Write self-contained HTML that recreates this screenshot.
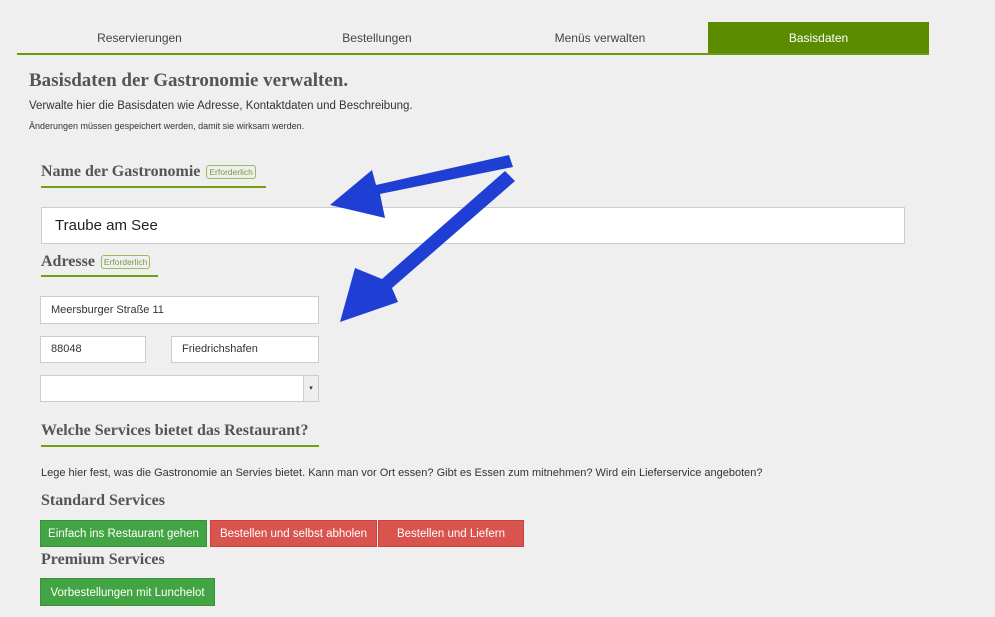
<!DOCTYPE html>
<html><head><meta charset="utf-8"><style>
body{margin:0;width:995px;height:617px;background:#efefef;font-family:"Liberation Sans",sans-serif;color:#333;position:relative;overflow:hidden}
.a{position:absolute}
.tab{position:absolute;top:22px;height:32px;line-height:32px;text-align:center;font-size:12px;color:#444}
.serif{font-family:"Liberation Serif",serif;color:#555;font-weight:bold}
.badge{display:inline-block;font-family:"Liberation Sans",sans-serif;font-weight:normal;font-size:8.5px;color:#7a9a3a;border:1px solid #9bbb5a;border-radius:3px;padding:1px 2px;vertical-align:middle;margin-left:2px}
.inp{position:absolute;background:#fff;border:1px solid #ccc;box-sizing:border-box;font-size:11px;padding-left:10px;color:#333}
.btn{position:absolute;height:27px;line-height:27px;color:#fff;font-size:11.5px;text-align:center;box-sizing:border-box}
.g{background:#43a443;border:1px solid #3a8f3a}.r{background:#d9534f;border:1px solid #c9403c}
.ul{position:absolute;height:0;border-top:2px solid #74a014}
</style></head><body>
<div class="tab" style="left:17px;width:245px">Reservierungen</div>
<div class="tab" style="left:262px;width:230px">Bestellungen</div>
<div class="tab" style="left:492px;width:216px">Menüs verwalten</div>
<div class="tab" style="left:708px;width:221px;background:#5b8c00;color:#fff">Basisdaten</div>
<div class="a" style="left:17px;top:53px;width:912px;height:2px;background:#6a9a10"></div>
<div class="a serif" style="left:29px;top:70px;font-size:19px">Basisdaten der Gastronomie verwalten.</div>
<div class="a" style="left:29px;top:100px;font-size:11.5px">Verwalte hier die Basisdaten wie Adresse, Kontaktdaten und Beschreibung.</div>
<div class="a" style="left:29px;top:121px;font-size:9px">Änderungen müssen gespeichert werden, damit sie wirksam werden.</div>
<div class="a serif" style="left:41px;top:163px;font-size:16px">Name der Gastronomie <span class="badge">Erforderlich</span></div>
<div class="ul" style="left:41px;top:186px;width:225px"></div>
<div class="inp" style="left:41px;top:207px;width:864px;height:37px;line-height:35px;font-size:15px;padding-left:13px;color:#222">Traube am See</div>
<div class="a serif" style="left:41px;top:253px;font-size:16px">Adresse <span class="badge">Erforderlich</span></div>
<div class="ul" style="left:41px;top:275px;width:117px"></div>
<div class="inp" style="left:40px;top:296px;width:279px;height:28px;line-height:26px">Meersburger Straße 11</div>
<div class="inp" style="left:40px;top:336px;width:106px;height:27px;line-height:25px">88048</div>
<div class="inp" style="left:171px;top:336px;width:148px;height:27px;line-height:25px">Friedrichshafen</div>
<div class="inp" style="left:40px;top:375px;width:279px;height:27px"><div class="a" style="right:0;top:0;width:14px;height:25px;background:#eee;border-left:1px solid #ccc;font-size:7px;text-align:center;line-height:25px">▾</div></div>
<div class="a serif" style="left:41px;top:422px;font-size:16px">Welche Services bietet das Restaurant?</div>
<div class="ul" style="left:41px;top:445px;width:278px"></div>
<div class="a" style="left:41px;top:467px;font-size:11px">Lege hier fest, was die Gastronomie an Servies bietet. Kann man vor Ort essen? Gibt es Essen zum mitnehmen? Wird ein Lieferservice angeboten?</div>
<div class="a serif" style="left:41px;top:492px;font-size:16px">Standard Services</div>
<div class="btn g" style="left:40px;top:520px;width:167px">Einfach ins Restaurant gehen</div>
<div class="btn r" style="left:210px;top:520px;width:167px">Bestellen und selbst abholen</div>
<div class="btn r" style="left:378px;top:520px;width:146px">Bestellen und Liefern</div>
<div class="a serif" style="left:41px;top:551px;font-size:16px">Premium Services</div>
<div class="btn g" style="left:40px;top:578px;width:175px;height:28px;line-height:28px">Vorbestellungen mit Lunchelot</div>
<svg class="a" style="left:0;top:0" width="995" height="617">
<g fill="#1f3fd4">
<polygon points="509,155 513,167 380,194 385,218 330,205 372,170 376,185"/>
<polygon points="505,171 515,181 392,288 398,302 340,322 355,268 382,279"/>
</g></svg>
</body></html>
